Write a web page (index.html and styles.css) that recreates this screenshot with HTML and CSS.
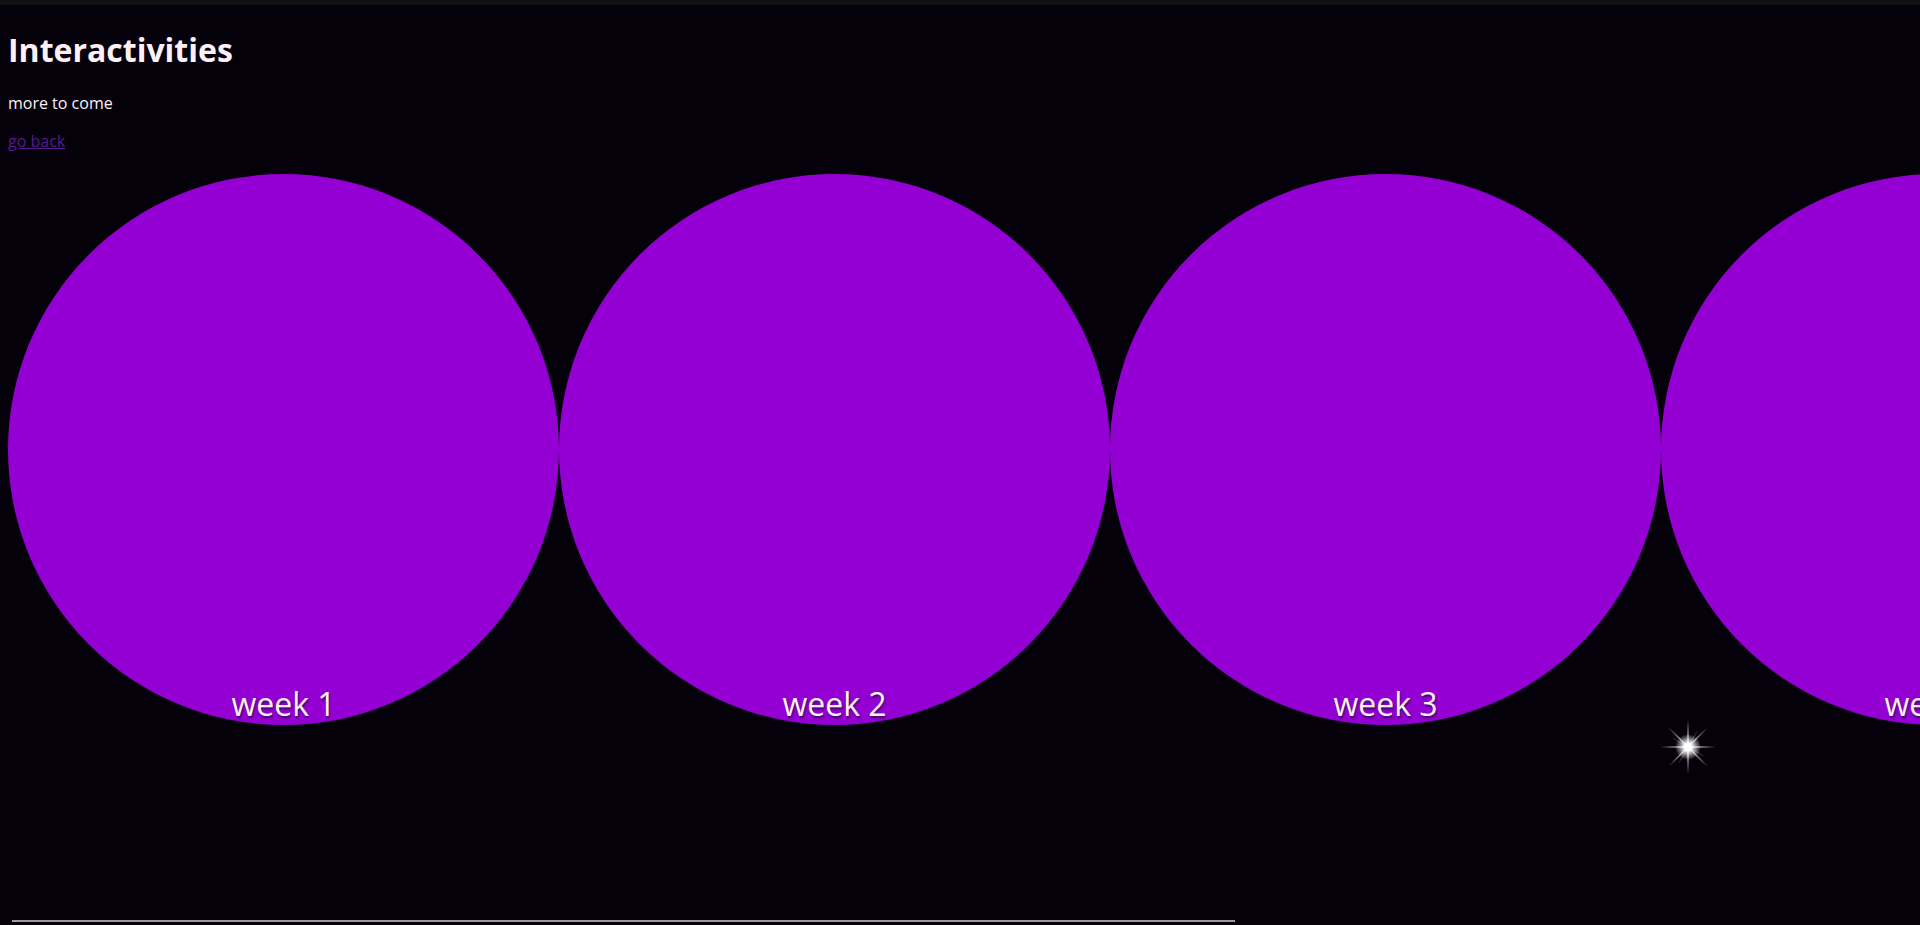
FILE: index.html
```html
<!DOCTYPE html>
<html>
<head>
    <title>Interactivities</title>
    <meta charset="UTF-8">
    <link rel="stylesheet" href="styles.css">
</head>
<body>
    <div class="topBar"></div>

    <div class="page">
        <h1 class="title">Interactivities</h1>
        <p class="note">more to come</p>
        <p class="note"><a class="backLink" href="#">go back</a></p>

        <div class="weekRow">
            <a class="weekCircle" href="#"><span class="weekLabel">week 1</span></a>
            <a class="weekCircle" href="#"><span class="weekLabel">week 2</span></a>
            <a class="weekCircle" href="#"><span class="weekLabel">week 3</span></a>
            <a class="weekCircle" href="#"><span class="weekLabel">week 4</span></a>

            <svg class="sparkle" width="60" height="60" viewBox="-30 -30 60 60">
                <defs>
                    <radialGradient id="glow">
                        <stop offset="0" stop-color="#ffffff" stop-opacity="1"/>
                        <stop offset="0.4" stop-color="#ffffff" stop-opacity="0.8"/>
                        <stop offset="1" stop-color="#ffffff" stop-opacity="0"/>
                    </radialGradient>
                    <linearGradient id="rayV" x1="0" y1="-27" x2="0" y2="27" gradientUnits="userSpaceOnUse">
                        <stop offset="0" stop-color="#ffffff" stop-opacity="0"/>
                        <stop offset="0.5" stop-color="#ffffff" stop-opacity="1"/>
                        <stop offset="1" stop-color="#ffffff" stop-opacity="0"/>
                    </linearGradient>
                    <linearGradient id="rayH" x1="-28" y1="0" x2="28" y2="0" gradientUnits="userSpaceOnUse">
                        <stop offset="0" stop-color="#ffffff" stop-opacity="0"/>
                        <stop offset="0.5" stop-color="#ffffff" stop-opacity="1"/>
                        <stop offset="1" stop-color="#ffffff" stop-opacity="0"/>
                    </linearGradient>
                </defs>
                <path d="M0 -27 L0 27" stroke="url(#rayV)" stroke-width="1.6"/>
                <path d="M-28 0 L28 0" stroke="url(#rayH)" stroke-width="1.6"/>
                <g transform="rotate(45)">
                    <path d="M0 -28 L0 28" stroke="url(#rayV)" stroke-width="1.4"/>
                    <path d="M-28 0 L28 0" stroke="url(#rayH)" stroke-width="1.4"/>
                </g>
                <g transform="rotate(30)" opacity="0.5">
                    <path d="M0 -18 L0 18" stroke="url(#rayV)" stroke-width="0.8"/>
                </g>
                <g transform="rotate(-60)" opacity="0.5">
                    <path d="M0 -18 L0 18" stroke="url(#rayV)" stroke-width="0.8"/>
                </g>
                <circle cx="0" cy="0" r="13" fill="url(#glow)"/>
                <circle cx="0" cy="0" r="4.5" fill="#ffffff"/>
            </svg>
        </div>
    </div>

    <div class="scrollThumb"></div>
</body>
</html>
```

FILE: styles.css
```css
html {
    overflow: hidden;
}

body {
    margin: 0;
    background-color: #05010b;
    color: #fff0f5;
    font-family: "Open Sans", "Liberation Sans", sans-serif;
    height: 925px;
}

.topBar {
    height: 5px;
    background-color: #111111;
}

.page {
    padding: 0 8px;
}

.title {
    font-size: 32px;
    font-weight: 700;
    margin: 23px 0 21px 0;
}

.note {
    font-size: 16px;
    margin: 16px 0;
}

.backLink {
    color: #551a8b;
}

.weekRow {
    position: relative;
    display: flex;
    margin-top: 22px;
    width: 3400px;
}

.weekCircle {
    flex: 0 0 551px;
    height: 551px;
    border-radius: 50%;
    background-color: #9400d3;
    display: flex;
    flex-direction: column;
    justify-content: flex-end;
    align-items: center;
    text-decoration: none;
}

.weekLabel {
    font-size: 32px;
    line-height: 42px;
    color: #fff0f5;
    text-shadow: 1px 2px 2px #3d0c66;
}

.sparkle {
    position: absolute;
    left: 1650px;
    top: 543px;
}

.scrollThumb {
    position: fixed;
    left: 12px;
    bottom: 3px;
    width: 1223px;
    height: 2px;
    background-color: #9a9a9a;
}
```
